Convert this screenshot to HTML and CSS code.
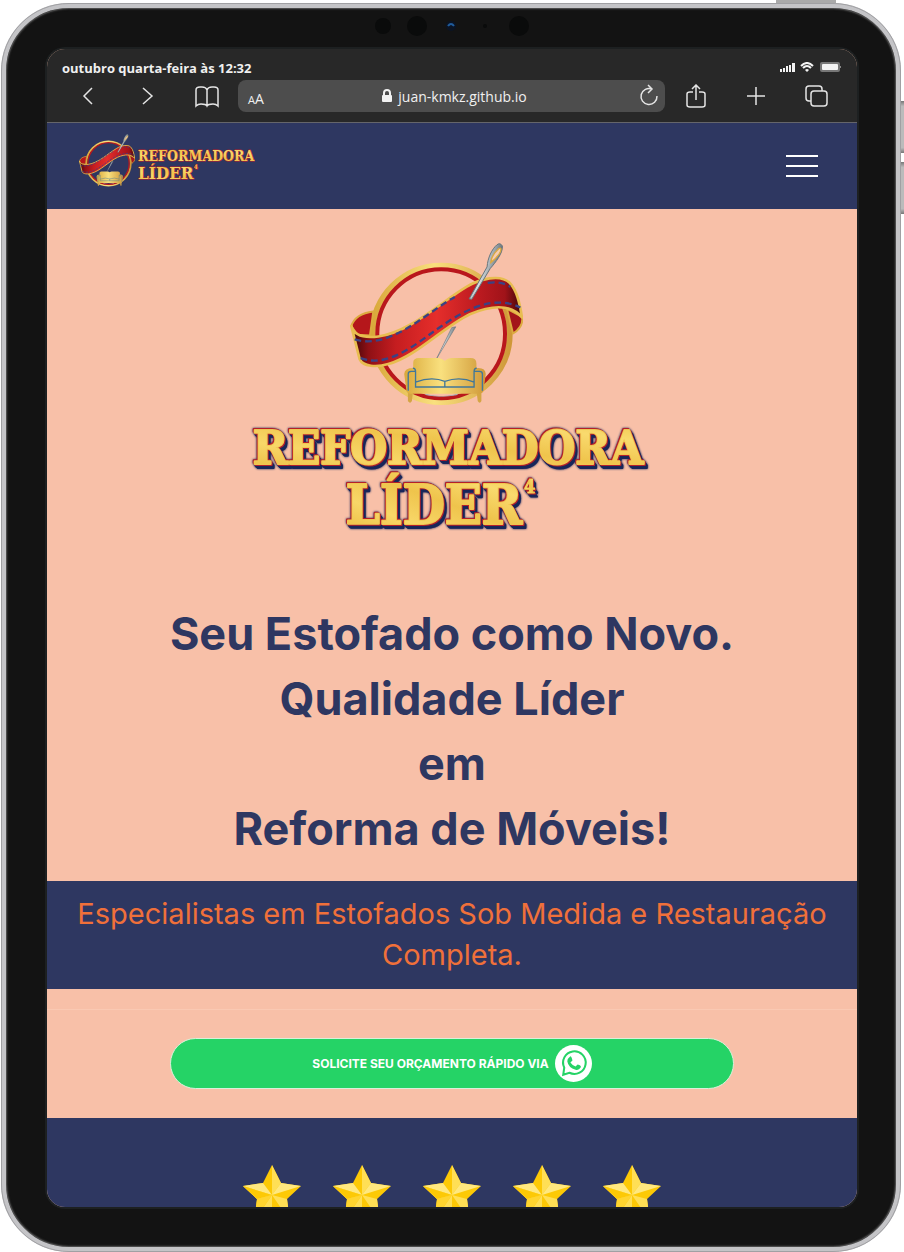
FILE: index.html
```html
<!DOCTYPE html>
<html lang="pt-BR">
<head>
<meta charset="utf-8">
<meta name="viewport" content="width=device-width, initial-scale=1">
<title>Reformadora Líder</title>
<link rel="stylesheet" href="styles.css">
</head>
<body>
<svg class="defs" aria-hidden="true">
  <defs>
    <linearGradient id="gold" x1="0" y1="0" x2="1" y2="0"><stop offset="0" stop-color="#d9a83a"/><stop offset=".45" stop-color="#f9e07e"/><stop offset="1" stop-color="#cf9838"/></linearGradient>
    <linearGradient id="letters" x1="0" y1="1" x2="1" y2="0"><stop offset="0" stop-color="#e9b93d"/><stop offset=".3" stop-color="#f8d768"/><stop offset=".55" stop-color="#efc44c"/><stop offset=".8" stop-color="#f9da6e"/><stop offset="1" stop-color="#efc44c"/></linearGradient>
    <linearGradient id="red" x1="0" y1="0" x2="1" y2="0"><stop offset="0" stop-color="#3e0508"/><stop offset=".1" stop-color="#8e1015"/><stop offset=".26" stop-color="#c51d20"/><stop offset=".5" stop-color="#e52e2b"/><stop offset=".75" stop-color="#bb1a20"/><stop offset=".9" stop-color="#a01319"/><stop offset="1" stop-color="#3e0508"/></linearGradient>
    <linearGradient id="steel" x1="0" y1="0" x2="1" y2=".4"><stop offset="0" stop-color="#5e6e78"/><stop offset=".5" stop-color="#d8dfe2"/><stop offset="1" stop-color="#46535b"/></linearGradient>
  </defs>
  <symbol id="emblem" viewBox="60 40 520 490">
    <ellipse cx="334" cy="313" rx="206" ry="205" fill="none" stroke="url(#gold)" stroke-width="18"/>
    <ellipse cx="334" cy="313" rx="192" ry="194" fill="none" stroke="#b9171c" stroke-width="12"/>
    <path d="M64 290C72 264 98 250 130 246L120 318L82 316Z" fill="#b5171b" stroke="#dcab40" stroke-width="6"/>
    <path d="M532 238L578 262C580 284 570 300 550 312Z" fill="#a3151a" stroke="#dcab40" stroke-width="6"/>
    <path d="M378 292L366 294L319 390Z" fill="url(#steel)" stroke="#70797e" stroke-width="2"/>
    <path d="M64 290C72 318 105 326 145 321C240 308 330 220 410 172C450 148 512 132 540 160C562 184 570 220 577 264C545 224 490 225 420 254C335 296 260 380 175 404C140 414 99 412 89 389Z" fill="url(#red)" stroke="#e8bd50" stroke-width="8" stroke-linejoin="round"/>
    <path d="M74 330C180 360 275 260 375 202M92 386C170 416 250 350 312 306C380 258 480 188 572 234M474 160Q515 154 542 172" fill="none" stroke="#3b4283" stroke-width="7" stroke-dasharray="20 12"/>
    <path d="M418 208L472 112C474 84 487 58 501 46Q511 37 518 49C520 70 498 98 482 116L426 209Z" fill="url(#steel)" stroke="#66747b" stroke-width="3"/>
    <path d="M483 99Q484 78 507 57Q517 52 512 66Q505 82 483 99Z" fill="#f5cdb2" stroke="#dca83f" stroke-width="4"/>
    <path d="M282 492Q334 510 388 492L380 498Q334 506 290 498Z" fill="#aab1b8"/>
    <path d="M234 490V515Q241 526 246 515L249 490M441 490L444 515Q450 526 455 515V490" fill="#d5a543"/>
    <path d="M250 416V400Q250 386 268 386H326Q337 388 345 394Q354 387 364 386H422Q440 386 440 402V416Q467 413 468 434L462 480Q461 493 449 493H241Q229 493 229 480L223 434Q224 416 250 416Z" fill="url(#gold)"/>
    <path d="M235 484V434Q235 426 244 426H257V458Q306 440 345 456Q390 440 433 458V426H449Q458 426 458 434V484M257 458V473H433V458M345 456V473M249 416Q257 416 257 426M441 416Q433 416 433 426" fill="none" stroke="#40779a" stroke-width="4"/>
  </symbol>
  <symbol id="star" viewBox="0 0 58 56">
    <path fill="#fdc905" d="M29 0L38 18L58 21L44 34L47 56L29 46L11 56L14 34L0 21L20 18Z"/>
    <path fill="#ffdf55" d="M29 0L38 18L29 30ZM29 30L44 34L47 56ZM29 30L29 46L11 56ZM29 30L14 34L0 21Z"/>
    <path fill="#ffe87f" d="M0 21L20 18L29 30ZM58 21L38 18L29 30Z"/>
    <path fill="#fdc905" d="M0 21L29 30L14 34Z"/>
    <path fill="#ffd52f" d="M14 34L29 30L11 56Z"/>
  </symbol>
</svg>

<div class="device">
  <span class="key key-top"></span>
  <span class="key key-up"></span>
  <span class="key key-down"></span>
  <svg class="sensors" viewBox="0 0 160 24" aria-hidden="true">
    <circle cx="11" cy="12" r="8" fill="#0a0b0b"/><circle cx="45" cy="12" r="10" fill="#0a0b0b"/>
    <circle cx="79" cy="12" r="5" fill="#0b1424"/><path d="M76 12Q79 8 82 12" stroke="#205c9c" stroke-width="2" fill="none"/>
    <circle cx="113" cy="12" r="2" fill="#0a0b0b"/><circle cx="147" cy="12" r="10" fill="#0a0b0b"/>
  </svg>
  <div class="screen">
    <div class="browser">
      <div class="status">
        <span>outubro quarta-feira às 12:32</span>
        <svg width="62" height="12" viewBox="0 0 62 12" aria-label="Sinal, Wi-Fi e bateria" fill="#f3f3f3">
          <path d="M0 7h2v3H0zM3 6h2v4H3zM6 4h2v6H6zM9 3h2v7H9zM12 1h3v9h-3z"/>
          <path d="M21 4Q27 -2 33 4M23 6Q27 2 31 6" fill="none" stroke="#f3f3f3" stroke-width="2"/><path d="M25 8Q27 6 29 8L27 10Z"/>
          <rect x="40" y="0" width="20" height="10" rx="2" fill="#777"/><rect x="42" y="2" width="16" height="6" rx="1"/><path d="M60 4h1v2h-1z" fill="#888"/>
        </svg>
      </div>
      <div class="toolbar">
        <button aria-label="Voltar"><svg viewBox="0 0 24 24"><path d="M17 4L9 12L17 20"/></svg></button>
        <button aria-label="Avançar"><svg viewBox="0 0 24 24"><path d="M8 4L17 12L8 20"/></svg></button>
        <button aria-label="Favoritos"><svg viewBox="0 0 24 24"><path d="M12 6Q11 3 7 3H5Q1 3 1 6V22Q3 20 6 20Q11 20 12 22Q13 20 18 20Q21 20 23 22V6Q23 3 19 3H17Q13 3 12 6V22"/></svg></button>
        <div class="address">
          <button class="text-size" aria-label="Tamanho do texto"><small>A</small>A</button>
          <span class="url"><svg viewBox="0 0 10 14" aria-hidden="true"><path d="M2 7V4a3 3 0 0 1 6 0v3" fill="none" stroke="#f2f2f2" stroke-width="2"/><rect y="6" width="10" height="7" rx="1" fill="#f2f2f2"/></svg>juan-kmkz.github.io</span>
          <button aria-label="Recarregar"><svg viewBox="0 0 24 24"><path d="M15 5A8 8 0 1 0 20 12M11 1L15 5L11 9"/></svg></button>
        </div>
        <button aria-label="Compartilhar"><svg viewBox="0 0 24 24"><path d="M8 8H5Q2 8 2 10V21Q2 23 5 23H17Q20 23 20 21V10Q20 8 17 8H14M11 16V1M7 5L11 1L15 5"/></svg></button>
        <button aria-label="Nova aba"><svg viewBox="0 0 24 24"><path d="M11 3V21M2 12H20"/></svg></button>
        <button aria-label="Abas"><svg viewBox="0 0 24 24"><rect x="6" y="7" width="16" height="15" rx="3"/><path d="M6 17H4Q1 17 1 14V5Q1 2 4 2H14Q17 2 17 5V7"/></svg></button>
      </div>
    </div>

    <header class="site-header">
      <a class="brand" href="#inicio" aria-label="Reformadora Líder">
        <svg class="brand-emblem"><use href="#emblem"/></svg>
        <svg class="brand-name" viewBox="0 0 120 44">
          <text class="small-letters" x="3" y="18" font-size="14">REFORMADORA</text>
          <text class="small-letters" x="3" y="36" font-size="17">LÍDER</text>
          <text class="small-letters" x="59" y="26" font-size="6">4</text>
        </svg>
      </a>
      <button class="menu" aria-label="Abrir menu"><span></span><span></span><span></span></button>
    </header>

    <main id="inicio">
      <section class="hero">
        <svg class="hero-emblem" aria-hidden="true"><use href="#emblem"/></svg>
        <svg class="hero-name" viewBox="0 0 430 130" role="img" aria-label="Reformadora Líder">
          <text class="big-letters" x="211" y="54" font-size="47" text-anchor="middle">REFORMADORA</text>
          <text class="big-letters" x="197" y="114" font-size="54" text-anchor="middle">LÍDER</text>
          <text class="big-letters tiny" x="287" y="83" font-size="18">4</text>
        </svg>
        <h1>Seu Estofado como Novo.<br>Qualidade Líder<br>em<br>Reforma de Móveis!</h1>
      </section>
      <p class="tagline">Especialistas em Estofados Sob Medida e Restauração Completa.</p>
      <section class="action">
        <a class="whatsapp" href="#contato">SOLICITE SEU ORÇAMENTO RÁPIDO VIA
          <svg viewBox="0 0 36 36" aria-label="WhatsApp"><circle cx="18" cy="18" r="18" fill="#fff"/><path d="M8 29L9 22A11 11 0 1 1 14 27Z" fill="none" stroke="#25d366" stroke-width="2"/><path d="M13 13L15 11Q16 11 17 15L15 17Q17 20 20 21L22 19Q26 20 25 22Q23 25 20 24Q13 22 12 16Q12 14 13 13Z" fill="#25d366"/></svg>
        </a>
      </section>
      <section class="rating" aria-label="Cinco estrelas">
        <svg><use href="#star"/></svg><svg><use href="#star"/></svg><svg><use href="#star"/></svg><svg><use href="#star"/></svg><svg><use href="#star"/></svg>
      </section>
    </main>
  </div>
</div>
</body>
</html>
```

FILE: styles.css
```css
* { box-sizing: border-box; }
body { margin: 0; padding: 3px 3px 0 1px; background: #fff; font-family: Inter, sans-serif; }
button { margin: 0; padding: 0; border: 0; background: none; color: inherit; font: inherit; cursor: pointer; }
svg { display: block; }
.defs { position: absolute; width: 0; height: 0; }

.device {
  position: relative;
  padding: 41px 39px 40px 41px;
  border: 5px solid #c4c4c7;
  border-radius: 68px;
  background: #131313;
  box-shadow: inset 0 0 2px 1px #555, inset 0 0 0 1px #333;
  outline: 1px solid #a0a0a3;
  outline-offset: -1px;
}
.key { position: absolute; background: linear-gradient(#777, #bbb 10%, #bbb 90%, #777); }
.key-top { top: -8px; right: 60px; width: 60px; height: 3px; background: #aaa; }
.key-up, .key-down { right: -8px; width: 3px; height: 52px; }
.key-up { top: 93px; }
.key-down { top: 154px; }
.sensors { position: absolute; top: 6px; left: 50%; width: 160px; margin-left: -79px; }

.screen { overflow: hidden; border-radius: 18px; box-shadow: 0 0 0 2px #1d2021; background: #f8c0a8; }

.browser { padding: 10px 15px; background: #282828; color: #f0f0f0; border-bottom: 1px solid #65656a; font-family: "Open Sans", sans-serif; }
.status { display: flex; justify-content: space-between; align-items: center; height: 18px; font-size: 13px; font-weight: 700; }
.toolbar { display: flex; align-items: center; gap: 36px; padding: 3px 13px 0; }
.toolbar button svg { width: 24px; height: 24px; fill: none; stroke: #e4e4e4; stroke-width: 1.5; }
.address { flex: 1; display: grid; grid-template-columns: 24px 1fr 24px; align-items: center; height: 32px; margin: 0 -16px 0 -17px; padding: 0 4px 0 10px; border-radius: 8px; background: #4d4d4d; }
.text-size { padding-top: 4px; font-size: 14px; text-align: left; }
.text-size small { font-size: 11px; }
.url { display: flex; align-items: center; justify-content: center; gap: 6px; font-size: 14px; }
.url svg { width: 10px; height: 14px; }

.site-header { display: flex; align-items: center; justify-content: space-between; height: 86px; padding: 0 39px 0 32px; background: #2e3761; }
.brand { display: flex; align-items: center; padding-bottom: 12px; }
.brand-emblem { width: 56px; height: 53px; }
.brand-name { width: 120px; height: 44px; margin-top: 10px; }
.small-letters, .big-letters { font-family: "DejaVu Serif Condensed", "DejaVu Serif", serif; font-weight: 700; fill: url(#letters); paint-order: stroke; stroke-linejoin: round; }
.small-letters { stroke: #b4202a; stroke-width: 1px; }
.big-letters {
  stroke: #f0c650;
  stroke-width: 2px;
  filter: drop-shadow(1px 1px 0 #b4202a) drop-shadow(-1px -1px 0 #b4202a) drop-shadow(0 0 1px #18265a) drop-shadow(2px 3px 0 #18265a);
}
.tiny { stroke-width: 1px; }
.menu { display: grid; gap: 8px; }
.menu span { width: 32px; height: 2px; background: #fff; }

.hero { display: flex; flex-direction: column; align-items: center; padding: 34px 24px 20px; color: #2e3761; }
.hero-emblem { width: 173px; height: 163px; margin-right: 32px; }
.hero-name { width: 430px; height: 130px; max-width: 100%; margin-top: 4px; }
h1 { margin: 61px 0 0; font-size: 45px; line-height: 65px; font-weight: 700; text-align: center; }
.tagline { margin: 0; padding: 12px 24px 14px; background: #2e3761; color: #f0703a; font-size: 29px; line-height: 41px; text-align: center; }
.action { margin-top: 20px; padding: 28px 24px 29px; border-top: 1px solid #fac9b3; }
.whatsapp { display: flex; align-items: center; justify-content: center; gap: 6px; width: 74%; height: 51px; margin: 0 auto; border: 1px solid #d9f0da; border-radius: 26px; background: #25d366; color: #fff; font-size: 12px; font-weight: 700; text-decoration: none; }
.whatsapp svg { width: 37px; height: 37px; }
.rating { display: flex; justify-content: center; gap: 32px; height: 89px; padding-top: 47px; overflow: hidden; background: #2e3761; }
.rating svg { flex: none; width: 58px; height: 56px; }
```
